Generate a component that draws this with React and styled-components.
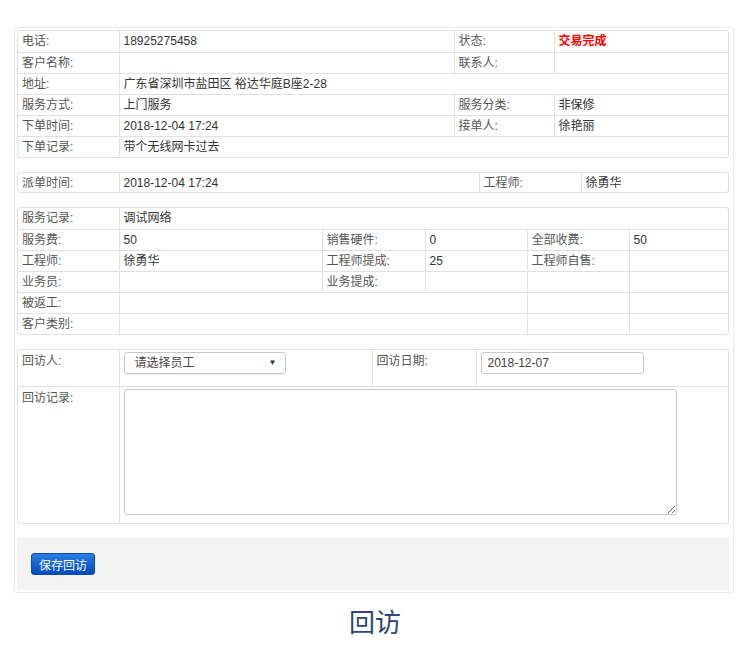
import React from 'react';
import styled, { createGlobalStyle } from 'styled-components';

const GlobalStyle = createGlobalStyle`
html, body {
    margin: 0;
    padding: 0;
    background: #fff;
}
body {
    font-family: "Liberation Sans", "Noto Sans CJK SC", sans-serif;
    font-size: 12px;
    line-height: 16px;
    color: #333;
}
`

const Page = styled.div`
padding-top: 28px;
`

const Panel = styled.div`
width: 718px;
box-sizing: border-box;
margin: 0 0 0 15px;
padding: 2px 4px 2px 2px;
background: #fff;
box-shadow: 0 0 2px rgba(0, 0, 0, 0.25);
display: flex;
flex-direction: column;
gap: 14px;
`

const Box = styled.div`
border: 1px solid #e0e0e0;
border-radius: 3px;
overflow: hidden;
`

const Table = styled.table`
width: 100%;
border-collapse: collapse;
table-layout: fixed;
tr + tr td {
    border-top: 1px solid #e0e0e0;
}
td + td {
    border-left: 1px solid #e0e0e0;
}
`

const Row = styled.tr`
height: ${p => p.$h || 21}px;
`

const Cell = styled.td`
padding: 0 4px;
vertical-align: ${p => p.$top ? 'top' : 'middle'};
padding-top: ${p => p.$top ? '3px' : '0'};
color: #333;
white-space: nowrap;
overflow: hidden;
`

const Label = styled(Cell)`
color: #555;
`

const Status = styled.span`
color: #f00;
font-weight: bold;
`

const Select = styled.div`
width: 162px;
height: 22px;
box-sizing: border-box;
border: 1px solid #c8c8c8;
border-radius: 3px;
box-shadow: 0 1px 1px rgba(0, 0, 0, 0.06);
display: flex;
align-items: center;
justify-content: space-between;
padding: 0 8px 0 10px;
color: #444;
margin-top: -1px;
`

const Arrow = styled.span`
font-size: 8px;
color: #333;
`

const Input = styled.div`
width: 163px;
height: 22px;
box-sizing: border-box;
border: 1px solid #c8c8c8;
border-radius: 3px;
display: flex;
align-items: center;
padding: 0 6px;
color: #444;
margin-top: -1px;
`

const TextArea = styled.textarea`
display: block;
width: 553px;
height: 126px;
box-sizing: border-box;
border: 1px solid #c8c8c8;
border-radius: 3px;
margin-top: -1px;
font-family: inherit;
resize: both;
`

const Footer = styled.div`
background: #f3f3f3;
border-top: 1px solid #ececec;
height: 52px;
padding: 14px 14px 0;
box-sizing: border-box;
`

const Button = styled.button`
width: 64px;
height: 22px;
border: 1px solid #0a4aa8;
border-radius: 3px;
background: linear-gradient(#2a7ee0, #0049bd);
color: #fff;
font-family: "Liberation Sans", "Noto Sans CJK SC", sans-serif;
font-size: 12px;
padding: 0;
`

const Caption = styled.div`
text-align: center;
font-family: "Noto Sans CJK SC", sans-serif;
font-size: 26px;
line-height: 32px;
color: #2d4876;
margin-top: 13px;
`

const Cols = ({ widths }) => (
    <colgroup>
        {widths.map((w, i) => <col key={i} style={{ width: w }} />)}
    </colgroup>
)

const App = () => {
    return (
        <Page>
            <GlobalStyle />
            <Panel>
                <Box>
                    <Table>
                        <Cols widths={[101, 335, 100, 176]} />
                        <tbody>
                            <Row><Label>电话:</Label><Cell>18925275458</Cell><Label>状态:</Label><Cell><Status>交易完成</Status></Cell></Row>
                            <Row><Label>客户名称:</Label><Cell></Cell><Label>联系人:</Label><Cell></Cell></Row>
                            <Row><Label>地址:</Label><Cell colSpan={3}>广东省深圳市盐田区 裕达华庭B座2-28</Cell></Row>
                            <Row><Label>服务方式:</Label><Cell>上门服务</Cell><Label>服务分类:</Label><Cell>非保修</Cell></Row>
                            <Row><Label>下单时间:</Label><Cell>2018-12-04 17:24</Cell><Label>接单人:</Label><Cell>徐艳丽</Cell></Row>
                            <Row><Label>下单记录:</Label><Cell colSpan={3}>带个无线网卡过去</Cell></Row>
                        </tbody>
                    </Table>
                </Box>
                <Box>
                    <Table>
                        <Cols widths={[101, 360, 102, 149]} />
                        <tbody>
                            <Row $h={19}><Label>派单时间:</Label><Cell>2018-12-04 17:24</Cell><Label>工程师:</Label><Cell>徐勇华</Cell></Row>
                        </tbody>
                    </Table>
                </Box>
                <Box>
                    <Table>
                        <Cols widths={[101, 203, 103, 102, 102, 101]} />
                        <tbody>
                            <Row><Label>服务记录:</Label><Cell colSpan={5}>调试网络</Cell></Row>
                            <Row><Label>服务费:</Label><Cell>50</Cell><Label>销售硬件:</Label><Cell>0</Cell><Label>全部收费:</Label><Cell>50</Cell></Row>
                            <Row><Label>工程师:</Label><Cell>徐勇华</Cell><Label>工程师提成:</Label><Cell>25</Cell><Label>工程师自售:</Label><Cell></Cell></Row>
                            <Row><Label>业务员:</Label><Cell></Cell><Label>业务提成:</Label><Cell></Cell><Cell></Cell><Cell></Cell></Row>
                            <Row><Label>被返工:</Label><Cell colSpan={3}></Cell><Cell></Cell><Cell></Cell></Row>
                            <Row><Label>客户类别:</Label><Cell colSpan={3}></Cell><Cell></Cell><Cell></Cell></Row>
                        </tbody>
                    </Table>
                </Box>
                <Box>
                    <Table>
                        <Cols widths={[101, 253, 104, 254]} />
                        <tbody>
                            <Row $h={36}>
                                <Label $top>回访人:</Label>
                                <Cell $top><Select>请选择员工<Arrow>▼</Arrow></Select></Cell>
                                <Label $top>回访日期:</Label>
                                <Cell $top><Input>2018-12-07</Input></Cell>
                            </Row>
                            <Row $h={137}>
                                <Label $top>回访记录:</Label>
                                <Cell $top colSpan={3}><TextArea /></Cell>
                            </Row>
                        </tbody>
                    </Table>
                </Box>
                <Footer>
                    <Button>保存回访</Button>
                </Footer>
            </Panel>
            <Caption>回访</Caption>
        </Page>
    )
}

export default App
